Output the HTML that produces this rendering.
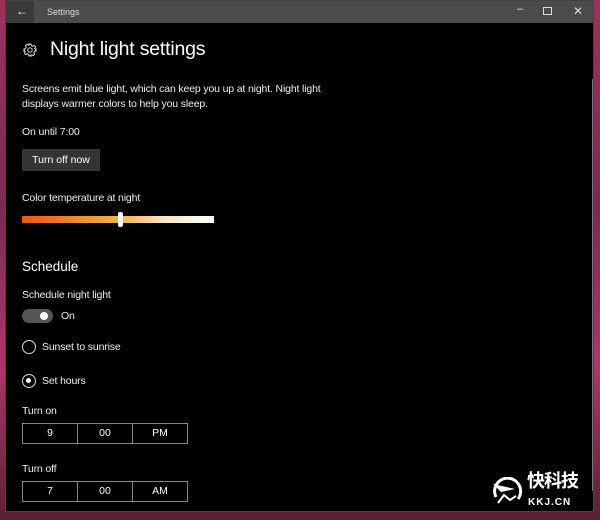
<!DOCTYPE html>
<html><head><style>
*{margin:0;padding:0;box-sizing:border-box}
body{width:600px;height:520px;overflow:hidden;background:linear-gradient(180deg,#a0305e 0%,#7a2a55 40%,#b0356a 70%,#5a2038 100%);font-family:"Liberation Sans",sans-serif;color:#fff;position:relative}
.win{position:absolute;left:5px;top:0;width:589px;height:512px;background:#000;border:1px solid #444}
.tb{position:absolute;left:0;top:0;width:100%;height:22px;background:#4b4b4b}
.back{position:absolute;left:0;top:0;width:28px;height:22px;background:#3a3a3a}
.t{position:absolute;white-space:nowrap}
.s{font-size:10.5px;color:#eee;letter-spacing:-0.15px}
.btn{position:absolute;left:16px;top:148px;width:78px;height:22px;background:#343434;font-size:10.5px;text-align:center;line-height:22px}
.slider{position:absolute;left:16px;top:215px;width:192px;height:7px;background:linear-gradient(90deg,#e85a0a 0%,#f07a20 20%,#f6b048 50%,#fbe6c6 75%,#fff 100%)}
.thumb{position:absolute;left:112px;top:211px;width:5px;height:15px;background:#fff;border-radius:2px}
.tog{position:absolute;left:16px;top:308px;width:31px;height:14px;border-radius:7px;background:#555}
.tog i{position:absolute;right:5px;top:3px;width:8px;height:8px;border-radius:50%;background:#fff}
.rad{position:absolute;left:16px;width:14px;height:14px;border:1.5px solid #ddd;border-radius:50%}
.rad i{position:absolute;left:3px;top:3px;width:5px;height:5px;border-radius:50%;background:#fff}
.tp{position:absolute;left:16px;width:166px;height:21px;border:1.5px solid #888;display:flex}
.tp div{flex:1;text-align:center;font-size:10.5px;line-height:18px;border-right:1.5px solid #888}
.tp div:last-child{border-right:none}
.sb{position:absolute;left:586px;top:78px;width:1px;height:412px;background:#777}
</style></head><body>
<div class="win">
<div class="tb"><div class="back"></div>
<div class="t" style="left:10px;top:3px;font-size:12px;color:#eee">←</div>
<div class="t" style="left:41px;top:6px;font-size:9px;color:#ddd">Settings</div>
<div class="t" style="left:511px;top:2px;font-size:11px;color:#ddd">–</div>
<div class="t" style="left:537px;top:6px;width:9px;height:8px;border:1px solid #ddd"></div>
<div class="t" style="left:567px;top:3px;font-size:12px;color:#ddd">✕</div>
</div>
<svg class="t" style="left:17px;top:42px" width="14" height="14" viewBox="0 0 14 14"><circle cx="7" cy="7" r="2.2" fill="none" stroke="#ddd" stroke-width="1"/><path d="M6 1h2l.4 1.6 1.3.6 1.5-.8 1.4 1.4-.8 1.5.6 1.3L13 6v2l-1.6.4-.6 1.3.8 1.5-1.4 1.4-1.5-.8-1.3.6L8 13H6l-.4-1.6-1.3-.6-1.5.8-1.4-1.4.8-1.5-.6-1.3L1 8V6l1.6-.4.6-1.3-.8-1.5 1.4-1.4 1.5.8 1.3-.6z" fill="none" stroke="#ddd" stroke-width="1"/></svg>
<div class="t" style="left:44px;top:37px;font-size:19.5px;color:#fff;letter-spacing:-0.2px">Night light settings</div>
<div class="t s" style="left:16px;top:81px;line-height:15px">Screens emit blue light, which can keep you up at night. Night light<br>displays warmer colors to help you sleep.</div>
<div class="t s" style="left:16px;top:125px">On until 7:00</div>
<div class="btn">Turn off now</div>
<div class="t s" style="left:16px;top:191px">Color temperature at night</div>
<div class="slider"></div><div class="thumb"></div>
<div class="t" style="left:16px;top:258px;font-size:13.5px">Schedule</div>
<div class="t s" style="left:16px;top:288px">Schedule night light</div>
<div class="tog"><i></i></div>
<div class="t s" style="left:55px;top:309px">On</div>
<div class="rad" style="top:339px"></div>
<div class="t s" style="left:36px;top:340px">Sunset to sunrise</div>
<div class="rad" style="top:373px"><i></i></div>
<div class="t s" style="left:36px;top:374px">Set hours</div>
<div class="t s" style="left:16px;top:404px">Turn on</div>
<div class="tp" style="top:422px"><div>9</div><div>00</div><div>PM</div></div>
<div class="t s" style="left:16px;top:462px">Turn off</div>
<div class="tp" style="top:480px"><div>7</div><div>00</div><div>AM</div></div>
<div class="sb"></div>
<svg class="t" style="left:484px;top:476px" width="34" height="30" viewBox="0 0 34 30"><path d="M6 20A13 13 0 1 1 28 22" fill="none" stroke="#fff" stroke-width="3"/><path d="M3 7l22 5-14 3z" fill="#fff"/><path d="M8 26l6-8 6 5 6-4" fill="none" stroke="#fff" stroke-width="2"/></svg>
<div class="t" style="left:521px;top:468px;font-size:18px;line-height:22px;font-weight:bold;font-family:'Noto Sans CJK SC',sans-serif;letter-spacing:-1px">快科技</div>
<div class="t" style="left:522px;top:496px;font-size:10px;line-height:11px;font-weight:bold;letter-spacing:1px">KKJ.CN</div>
</div>
</body></html>
